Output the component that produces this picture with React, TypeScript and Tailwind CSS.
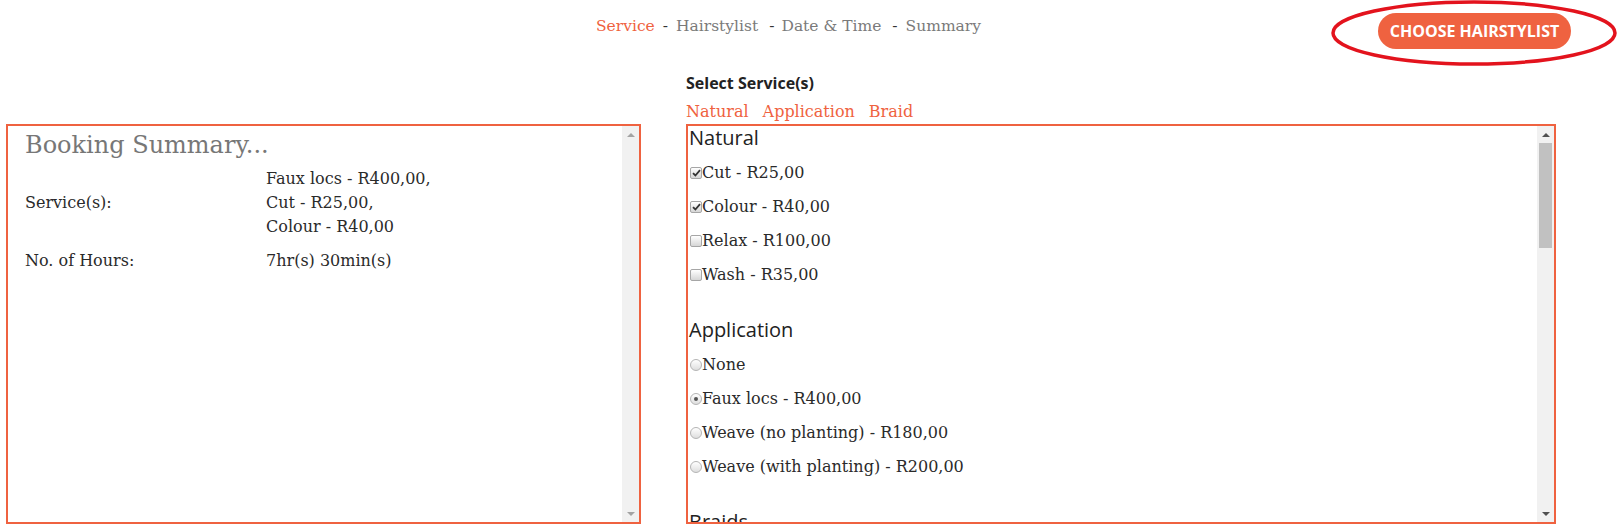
import React from "react";

const serif = "font-['DejaVu_Serif',serif]";
const sans = "font-['Open_Sans',sans-serif]";

const naturalItems = [
  { label: "Cut - R25,00", checked: true },
  { label: "Colour - R40,00", checked: true },
  { label: "Relax - R100,00", checked: false },
  { label: "Wash - R35,00", checked: false },
];

const applicationItems = [
  { label: "None", checked: false },
  { label: "Faux locs - R400,00", checked: true },
  { label: "Weave (no planting) - R180,00", checked: false },
  { label: "Weave (with planting) - R200,00", checked: false },
];

const Arrow = ({ up, dark }: { up?: boolean; dark?: boolean }) => (
  <div className="h-[17px] w-full flex items-center justify-center">
    <svg width="8" height="4" viewBox="0 0 8 4">
      <polygon
        points={up ? "0,4 8,4 4,0" : "0,0 8,0 4,4"}
        fill={dark ? "#505050" : "#a3a3a3"}
      />
    </svg>
  </div>
);

const ScrollTrack = ({ thumb }: { thumb?: boolean }) => (
  <div className="w-[17px] shrink-0 bg-[#f1f1f1] flex flex-col">
    <Arrow up dark={thumb} />
    {thumb && <div className="mx-[2px] h-[105px] bg-[#c1c1c1]" />}
    <div className="flex-1" />
    <Arrow dark={thumb} />
  </div>
);

const Checkbox = ({ checked }: { checked: boolean }) => (
  <span className="ml-[1px] w-[12px] h-[12px] shrink-0 rounded-[2px] border border-[#a6a6a6] bg-gradient-to-b from-white to-[#d6d6d6] flex items-center justify-center">
    {checked && (
      <svg width="9" height="8" viewBox="0 0 9 8">
        <path d="M1 4.2 L3.4 6.5 L8 1.2" stroke="#333" strokeWidth="1.8" fill="none" />
      </svg>
    )}
  </span>
);

const Radio = ({ checked }: { checked: boolean }) => (
  <span className="ml-[1px] w-[12px] h-[12px] shrink-0 rounded-full border border-[#b4b4b4] bg-gradient-to-b from-white to-[#dedede] flex items-center justify-center">
    {checked && <span className="w-[4px] h-[4px] rounded-full bg-[#555]" />}
  </span>
);

const App = () => {
  return (
    <div className="relative w-[1618px] h-[532px] bg-white overflow-hidden text-[#2a2a2a]">
      {/* header */}
      <div className="h-[64px] flex items-start">
        <div className={`${serif} ml-[596px] mt-[15px] flex text-[15.5px] leading-[22px] text-[#7a7a7a]`}>
          <span className="text-[#ef6240]">Service</span>
          <span className="ml-[8px] text-[#333]">-</span>
          <span className="ml-[8px]">Hairstylist</span>
          <span className="ml-[11px] text-[#333]">-</span>
          <span className="ml-[7px]">Date &amp; Time</span>
          <span className="ml-[11px] text-[#333]">-</span>
          <span className="ml-[8px]">Summary</span>
        </div>
        <button
          className={`${sans} ml-auto mr-[47px] mt-[13px] h-[36px] w-[193px] rounded-[18px] bg-[#ef6240] text-white font-bold text-[16px] uppercase`}
        >
          Choose Hairstylist
        </button>
      </div>

      <svg className="absolute left-[1330px] top-0" width="288" height="68" viewBox="0 0 288 68">
        <ellipse cx="144" cy="33" rx="141" ry="31" fill="none" stroke="#e3131d" strokeWidth="3.5" />
      </svg>

      <div className="flex">
        {/* booking summary */}
        <div className="ml-[6px] mt-[60px] w-[635px] h-[400px] border-2 border-[#ef6240] flex">
          <div className={`${serif} flex-1 pl-[17px]`}>
            <div className="pt-[4px] text-[24px] leading-[30px] text-[#777]">Booking Summary...</div>
            <div className="mt-[7px] grid grid-cols-[241px_1fr] items-center gap-y-[10px] text-[16px] leading-[24px] text-[#2a2a2a]">
              <div>Service(s):</div>
              <div>
                <div>Faux locs - R400,00,</div>
                <div>Cut - R25,00,</div>
                <div>Colour - R40,00</div>
              </div>
              <div>No. of Hours:</div>
              <div>7hr(s) 30min(s)</div>
            </div>
          </div>
          <ScrollTrack />
        </div>

        {/* service selection */}
        <div className="ml-[45px] w-[870px]">
          <div className={`${sans} mt-[9px] text-[16px] leading-[21px] font-bold text-[#222]`}>Select Service(s)</div>
          <div className={`${serif} mt-[7px] flex gap-[14px] text-[16px] leading-[22px] text-[#ef6240]`}>
            <span>Natural</span>
            <span>Application</span>
            <span>Braid</span>
          </div>
          <div className="mt-[1px] h-[400px] border-2 border-[#ef6240] flex">
            <div className="flex-1 overflow-hidden pl-[1px]">
              <div className={`${sans} text-[20px] leading-[24px] text-[#222] mb-[6px]`}>Natural</div>
              {naturalItems.map((item) => (
                <div key={item.label} className={`${serif} h-[34px] flex items-center text-[16px]`}>
                  <Checkbox checked={item.checked} />
                  <span>{item.label}</span>
                </div>
              ))}
              <div className={`${sans} mt-[26px] text-[20px] leading-[24px] text-[#222] mb-[6px]`}>Application</div>
              {applicationItems.map((item) => (
                <div key={item.label} className={`${serif} h-[34px] flex items-center text-[16px]`}>
                  <Radio checked={item.checked} />
                  <span>{item.label}</span>
                </div>
              ))}
              <div className={`${sans} mt-[26px] text-[20px] leading-[24px] text-[#222]`}>Braids</div>
            </div>
            <ScrollTrack thumb />
          </div>
        </div>
      </div>
    </div>
  );
};

export default App;
